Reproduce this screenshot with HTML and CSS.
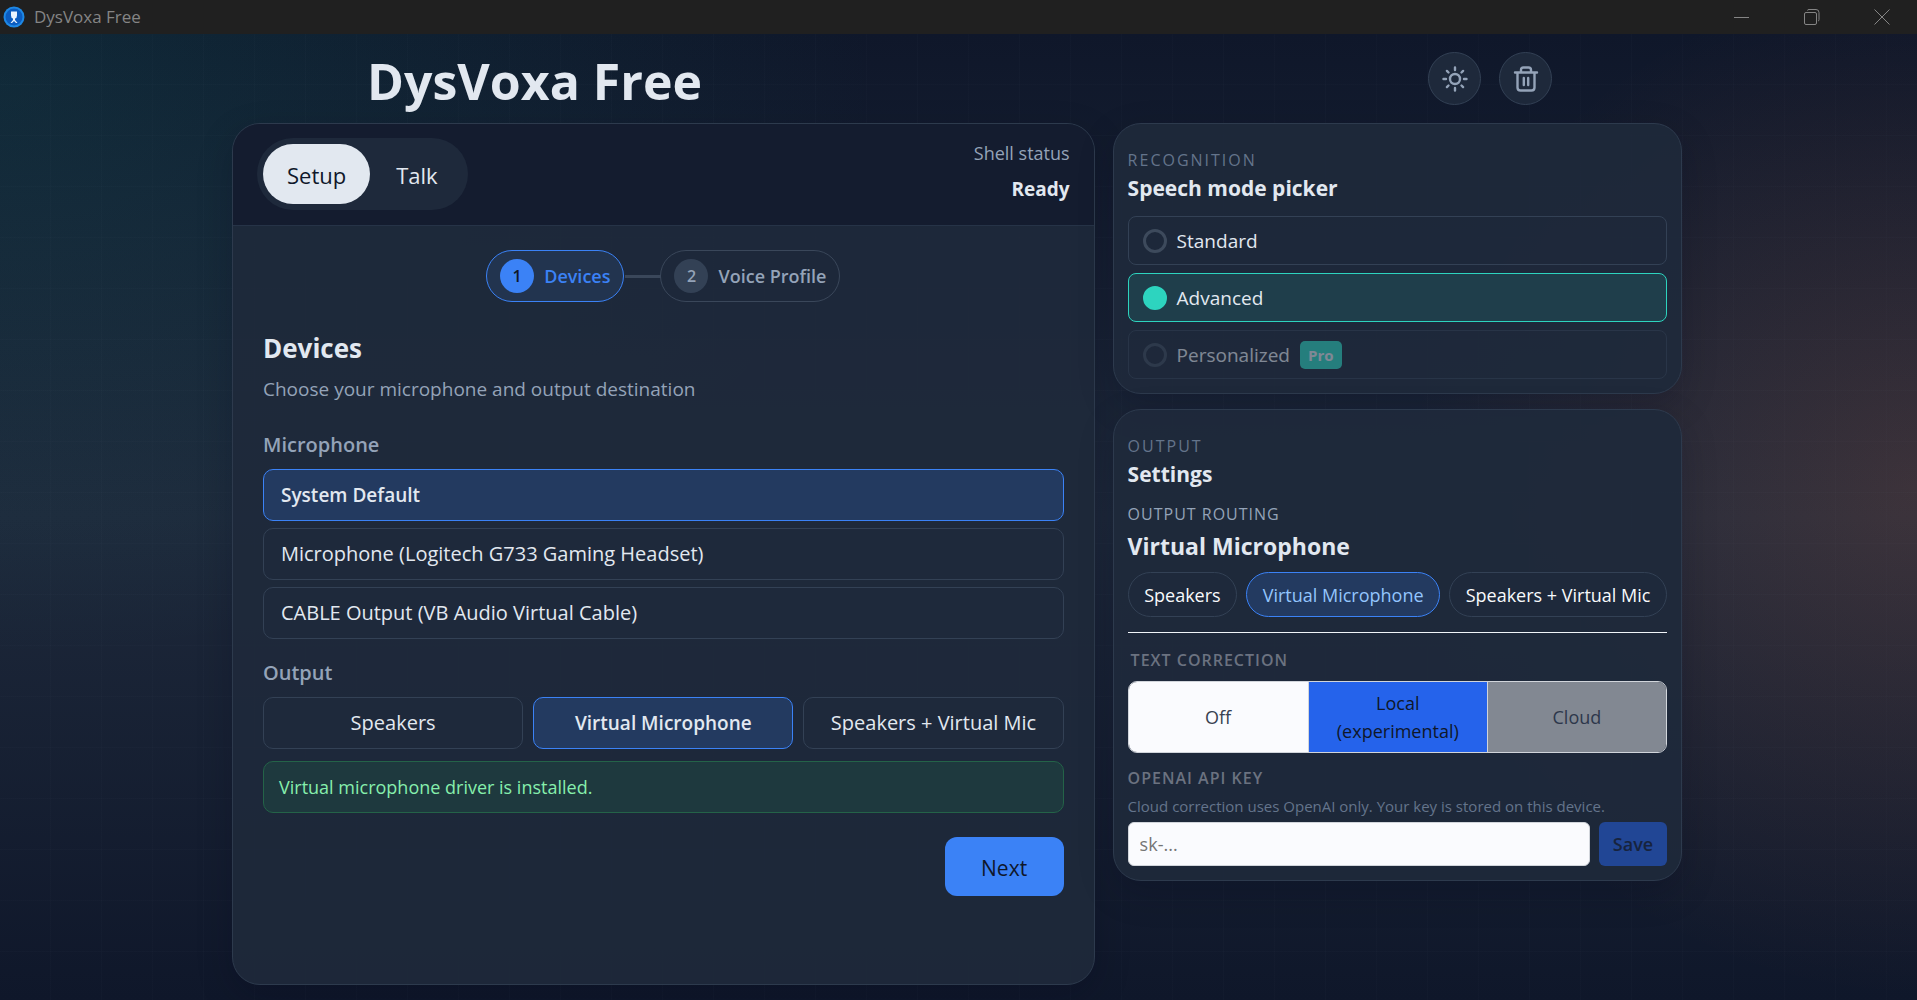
FILE: index.html
```html
<!DOCTYPE html>
<html lang="en">
<head>
<meta charset="utf-8">
<title>DysVoxa Free</title>
<link rel="stylesheet" href="styles.css">
</head>
<body>
<div class="titlebar">
  <svg class="app-icon" viewBox="0 0 22 22" aria-hidden="true"><circle cx="11" cy="11" r="10.5" fill="#1e88e5"/><circle cx="11" cy="11" r="8.500" fill="#0b5cc0"/><path d="M8 5.500h6v4q0 2.500-2 3v1.500l2.500 3h-1.500L11 15l-2 2H7.500l2.500-3v-1.500q-2-.5-2-3z" fill="#eaf4ff"/></svg>
  <span class="titlebar-name">DysVoxa Free</span>
  <div class="window-controls">
    <button class="window-button" aria-label="Minimize"><svg viewBox="0 0 16 16"><path d="M0 8.500h15"/></svg></button>
    <button class="window-button" aria-label="Restore"><svg viewBox="0 0 16 16"><rect x=".5" y="3.500" width="12" height="12" rx="1.500"/><path d="M3.500 1.500q0-1 1.500-1h7q3 0 3 3v7q0 1.500-1 1.500"/></svg></button>
    <button class="window-button" aria-label="Close"><svg viewBox="0 0 16 16"><path d="M.5.5l15 15M15.500.5l-15 15"/></svg></button>
  </div>
</div>
<div class="app">
  <header class="app-header">
    <h1 class="app-title">DysVoxa Free</h1>
    <div class="header-actions">
      <button class="icon-button" aria-label="Toggle theme"><svg viewBox="0 0 28 28"><circle cx="14" cy="14" r="5"/><path d="M14 2.500v2.500M14 23v2.500M2.500 14H5M23 14h2.500M5.900 5.900l1.600 1.600M20.500 20.500l1.600 1.600M5.900 22.100l1.600-1.600M20.500 7.500l1.600-1.600"/></svg></button>
      <button class="icon-button" aria-label="Clear"><svg viewBox="0 0 28 28"><path d="M3 7.500h22M5.500 7.500v15q0 3 3 3h11q3 0 3-3v-15M9 7V5q0-2.500 2.500-2.500h5Q19 2.500 19 5v2M11.800 13v7M16.200 13v7"/></svg></button>
    </div>
  </header>
  <main class="columns">
    <section class="panel workspace">
      <div class="workspace-head">
        <div class="tabs">
          <button class="tab tab-active">Setup</button>
          <button class="tab">Talk</button>
        </div>
        <div class="shell-status">
          <span class="shell-label">Shell status</span>
          <strong class="shell-value">Ready</strong>
        </div>
      </div>
      <div class="workspace-body">
        <ol class="steps">
          <li class="step step-active"><span class="step-number">1</span>Devices</li>
          <li class="step"><span class="step-number">2</span>Voice Profile</li>
        </ol>
        <h2 class="page-title">Devices</h2>
        <p class="page-lead">Choose your microphone and output destination</p>
        <h3 class="field-title">Microphone</h3>
        <div class="device-list">
          <button class="choice choice-active">System Default</button>
          <button class="choice">Microphone (Logitech G733 Gaming Headset)</button>
          <button class="choice">CABLE Output (VB Audio Virtual Cable)</button>
        </div>
        <h3 class="field-title">Output</h3>
        <div class="output-list">
          <button class="choice choice-center">Speakers</button>
          <button class="choice choice-center choice-active">Virtual Microphone</button>
          <button class="choice choice-center">Speakers + Virtual Mic</button>
        </div>
        <p class="notice">Virtual microphone driver is installed.</p>
        <div class="page-actions"><button class="next-button">Next</button></div>
      </div>
    </section>
    <aside class="side">
      <section class="panel card">
        <p class="eyebrow">RECOGNITION</p>
        <h2 class="card-title">Speech mode picker</h2>
        <div class="modes">
          <label class="mode"><input class="mode-radio" type="radio" name="mode">Standard</label>
          <label class="mode mode-active"><input class="mode-radio" type="radio" name="mode" checked>Advanced</label>
          <label class="mode mode-disabled"><input class="mode-radio" type="radio" name="mode" disabled>Personalized<span class="badge">Pro</span></label>
        </div>
      </section>
      <section class="panel card">
        <p class="eyebrow">OUTPUT</p>
        <h2 class="card-title">Settings</h2>
        <p class="routing-label">OUTPUT ROUTING</p>
        <p class="routing-value">Virtual Microphone</p>
        <div class="pills">
          <button class="pill">Speakers</button>
          <button class="pill pill-active">Virtual Microphone</button>
          <button class="pill">Speakers + Virtual Mic</button>
        </div>
        <hr class="divider">
        <fieldset class="correction">
          <legend class="setting-label correction-label">TEXT CORRECTION</legend>
          <div class="segments">
            <button class="segment">Off</button>
            <button class="segment segment-active">Local (experimental)</button>
            <button class="segment segment-disabled" disabled>Cloud</button>
          </div>
        </fieldset>
        <label class="setting-label key-label" for="api-key">OPENAI API KEY</label>
        <p class="hint">Cloud correction uses OpenAI only. Your key is stored on this device.</p>
        <div class="key-row">
          <input class="key-input" id="api-key" type="text" placeholder="sk-...">
          <button class="save-button" disabled>Save</button>
        </div>
      </section>
    </aside>
  </main>
</div>
</body>
</html>
```
FILE: styles.css
```css
* { box-sizing: border-box; }

body {
  margin: 0;
  min-height: 100vh;
  display: flex;
  flex-direction: column;
  background: #0f172a;
  color: #e2e8f0;
  font-family: "Open Sans", "Noto Sans", sans-serif;
  font-size: 19px;
  line-height: 28px;
}

h1, h2, h3, p, ol, fieldset { margin: 0; padding: 0; border: 0; }
button, input { font: inherit; color: inherit; margin: 0; }

.titlebar {
  display: flex;
  align-items: center;
  height: 34px;
  padding-left: 3px;
  background: #202020;
  color: #858585;
}
.app-icon { width: 22px; height: 22px; }
.titlebar-name { margin-left: 9px; font-size: 17px; }
.window-controls { display: flex; margin-left: auto; }
.window-button { display: grid; place-items: center; width: 70px; height: 34px; padding: 0; border: 0; background: none; }
.window-button svg { width: 16px; height: 16px; fill: none; stroke: #858585; stroke-width: 1; }

.app {
  flex: 1;
  padding: 0 24px 15px;
  background:
    repeating-linear-gradient(90deg, transparent 0 50px, rgba(148, 163, 184, 0.02) 50px 51px),
    repeating-linear-gradient(180deg, transparent 0 50px, rgba(148, 163, 184, 0.02) 50px 51px),
    radial-gradient(ellipse 46% 60% at 0% 5%, rgba(20, 184, 166, 0.11), transparent),
    radial-gradient(circle 510px at 100% 47%, rgba(250, 115, 60, 0.14), transparent),
    linear-gradient(180deg, #0f172a, #1e293b 50%, #0f172a);
}

.app-header {
  display: flex;
  justify-content: space-between;
  align-items: flex-start;
  max-width: 1187px;
  height: 89px;
  margin: 0 auto;
  padding: 18px 0 0 2px;
}
.app-title { font-size: 50px; line-height: 58px; font-weight: 700; }
.header-actions { display: flex; gap: 18px; }
.icon-button { display: grid; place-items: center; width: 53px; height: 53px; padding: 0; border: 1px solid #334155; border-radius: 50%; background: #1e293b; }
.icon-button svg { width: 28px; height: 28px; fill: none; stroke: #94a3b8; stroke-width: 2.400; stroke-linecap: round; stroke-linejoin: round; }

.columns {
  display: grid;
  grid-template-columns: minmax(0, 1.515fr) minmax(0, 1fr);
  gap: 18px;
  max-width: 1453px;
  margin: 0 auto;
  padding-right: 3px;
}
.panel {
  border: 1px solid #2d3a4d;
  border-radius: 28px;
  background: rgba(30, 41, 59, 0.92);
  box-shadow: 0 12px 36px rgba(2, 6, 23, 0.2);
}
.workspace { overflow: hidden; }
.workspace-head {
  display: flex;
  justify-content: space-between;
  padding: 14px 24px 15px;
  border-bottom: 1px solid #263347;
  background: #141c2f;
}
.tabs { display: flex; gap: 2px; padding: 6px; border-radius: 36px; background: #1e293b; }
.tab { height: 60px; padding: 2px 24px 0; border: 0; border-radius: 30px; background: none; font-size: 22px; }
.tab-active { background: #e2e8f0; color: #0f172a; }
.shell-status { display: flex; flex-direction: column; text-align: right; }
.shell-label { line-height: 30px; font-size: 18px; color: #94a3b8; }
.shell-value { line-height: 42px; font-weight: 700; }

.workspace-body { padding: 24px 30px 88px; }
.steps { display: flex; justify-content: center; list-style: none; }
.step {
  display: flex;
  align-items: center;
  gap: 10px;
  height: 52px;
  padding: 0 13px;
  border: 1px solid #3a475a;
  border-radius: 26px;
  color: #94a3b8;
  font-size: 18px;
  font-weight: 600;
}
.step + .step { position: relative; margin-left: 36px; }
.step + .step::before { content: ""; position: absolute; right: 100%; width: 36px; height: 3px; background: #3a475a; }
.step-number { display: grid; place-items: center; width: 34px; height: 34px; border-radius: 50%; background: #334155; font-size: 16px; }
.step-active { border-color: #3b82f6; background: #22344f; color: #3b82f6; }
.step-active .step-number { background: #3b82f6; color: #0f172a; }

.page-title { margin-top: 28px; font-size: 26px; line-height: 36px; font-weight: 700; }
.page-lead { margin-top: 9px; padding-bottom: 8px; color: #94a3b8; }
.field-title { margin: 16px 0 6px; font-size: 20px; line-height: 36px; font-weight: 600; color: #94a3b8; }
.device-list { display: grid; gap: 7px; }
.output-list { display: grid; grid-template-columns: repeat(3, minmax(0, 1fr)); gap: 10px; }
.choice {
  height: 52px;
  padding: 0 17px;
  border: 1px solid #334155;
  border-radius: 10px;
  background: #1e293b;
  font-size: 20px;
  text-align: left;
}
.choice-center { text-align: center; }
.choice-active { border-color: #3b82f6; background: #233a60; font-size: 19px; font-weight: 600; }
.notice {
  margin-top: 12px;
  padding: 11px 15px;
  border: 1px solid #246348;
  border-radius: 10px;
  background: #1e393e;
  color: #86efac;
  font-size: 18px;
}
.page-actions { display: flex; justify-content: flex-end; margin-top: 24px; }
.next-button { width: 119px; height: 59px; padding: 2px 0 0; border: 0; border-radius: 12px; background: #3b82f6; color: #0f172a; font-size: 21px; font-weight: 500; }

.side { display: flex; flex-direction: column; gap: 15px; }
.card { padding: 22px 14px 14px; }
.eyebrow { font-size: 16px; letter-spacing: 2px; color: #64748b; }
.card-title { font-size: 21px; font-weight: 700; }
.modes { display: grid; gap: 8px; margin-top: 14px; }
.mode {
  display: flex;
  align-items: center;
  gap: 10px;
  height: 49px;
  padding: 0 14px;
  border: 1px solid #334155;
  border-radius: 8px;
}
.mode-radio { appearance: none; width: 24px; height: 24px; margin: 0; border: 3px solid #3d4a5c; border-radius: 50%; }
.mode-radio:checked { border-color: #2dd4bf; background: #2dd4bf; }
.mode-active { border-color: #2dd4bf; background: #1f3e4b; }
.mode-disabled { opacity: 0.5; }
.badge { padding: 0 8px; border-radius: 5px; background: #2dd4bf; font-size: 15px; font-weight: 700; }

.routing-label { margin-top: 12px; font-size: 16px; letter-spacing: 1px; color: #94a3b8; }
.routing-value { font-size: 23px; line-height: 36px; font-weight: 700; }
.pills { display: flex; gap: 9px; margin-top: 8px; }
.pill { flex: 1 1 auto; height: 45px; padding: 0 14px; border: 1px solid #334155; border-radius: 23px; background: #1e293b; color: #f8fafc; font-size: 18px; white-space: nowrap; }
.pill-active { border-color: #3b82f6; background: #233a60; color: #93c5fd; }
.divider { margin: 15px 0 13px; border: 0; border-top: 1px solid #f1f5f9; }
.setting-label { font-size: 16px; font-weight: 600; letter-spacing: 1px; color: #6b7280; }
.correction { min-width: 0; }
.correction-label { padding: 0 3px; }
.segments { display: grid; grid-template-columns: repeat(3, minmax(0, 1fr)); margin-top: 7px; border: 1px solid #d1d5db; border-radius: 9px; overflow: hidden; }
.segment { height: 70px; padding: 0 20px; border: 0; background: #fafbfe; color: #374151; font-size: 18px; font-weight: 500; }
.segment + .segment { border-left: 1px solid #d1d5db; }
.segment-active { background: #2563eb; color: #0f172a; }
.segment-disabled { background: #828892; color: #2d374b; }
.key-label { display: block; margin-top: 11px; }
.hint { font-size: 15px; color: #64748b; }
.key-row { display: flex; gap: 9px; margin-top: 2px; }
.key-input { flex: 1; min-width: 0; height: 44px; padding: 0 11px; border: 1px solid #d1d5db; border-radius: 6px; background: #fafbfe; font-size: 18px; }
.key-input::placeholder { color: #757575; opacity: 1; }
.save-button { width: 68px; height: 44px; padding: 0; border: 0; border-radius: 6px; background: #214695; color: #17233d; font-size: 18px; font-weight: 600; }
```
